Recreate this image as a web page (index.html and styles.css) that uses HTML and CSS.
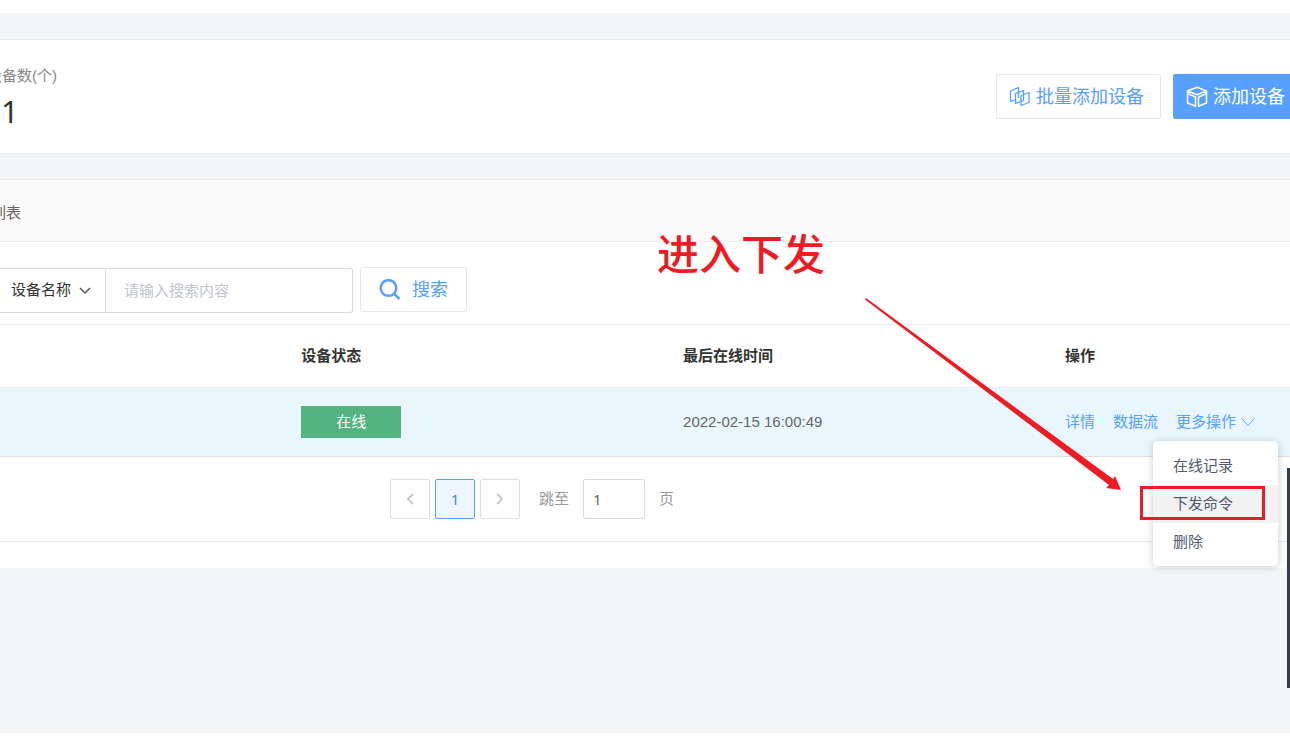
FILE: index.html
```html
<!DOCTYPE html>
<html lang="zh-CN">
<head>
<meta charset="utf-8">
<title>设备列表</title>
<link rel="stylesheet" href="styles.css">
</head>
<body>
<div class="page">
  <main class="content">
    <section class="summary">
      <div class="stat">
        <div class="stat-label">设备数(个)</div>
        <div class="stat-value">1</div>
      </div>
      <div class="actions">
        <button class="btn btn-batch" type="button">
          <svg width="22" height="22" viewBox="0 0 22 22" fill="none" stroke="currentColor" stroke-width="1.300" stroke-linejoin="round"><path d="M6 14 1.500 15.500V5L9.500 1.500V12M6.500 7.500 14.500 4.500V14.500L6.500 17.500zM12 9.500 20 6.500V16.500L12 19.500z"/></svg>
          <span>批量添加设备</span>
        </button>
        <button class="btn btn-primary" type="button">
          <svg width="22" height="22" viewBox="0 0 22 22" fill="none" stroke="currentColor" stroke-width="1.500" stroke-linejoin="round"><path d="M11 1.200 1.500 5 11 8.800 20.500 5zM1.500 5V17L9.500 20.300V11L1.500 7.600M20.500 5V17L12.500 20.300V11L20.500 7.600"/></svg>
          <span>添加设备</span>
        </button>
      </div>
    </section>

    <section class="panel">
      <h2 class="panel-title">列表</h2>
      <form class="search">
        <div class="search-box">
          <div class="select-wrap">
            <select class="field-select" aria-label="搜索字段"><option>设备名称</option></select>
            <svg class="select-arrow" width="12" height="8" viewBox="0 0 12 8" fill="none" stroke="currentColor" stroke-width="1.500"><path d="M1 1l5 5 5-5"/></svg>
          </div>
          <input class="search-input" type="text" placeholder="请输入搜索内容" aria-label="搜索内容">
        </div>
        <button class="btn btn-search" type="button">
          <svg width="22" height="22" viewBox="0 0 22 22" fill="none" stroke="currentColor" stroke-width="2.500"><circle cx="9.500" cy="9" r="7.800"/><path d="M15 14.500 20.500 20"/></svg>
          <span>搜索</span>
        </button>
      </form>

      <table class="devices">
        <colgroup><col class="col-first"><col class="col-mid"><col class="col-mid"><col></colgroup>
        <thead>
          <tr><td></td><th scope="col">设备状态</th><th scope="col">最后在线时间</th><th scope="col">操作</th></tr>
        </thead>
        <tbody>
          <tr>
            <td></td>
            <td><span class="status">在线</span></td>
            <td>2022-02-15 16:00:49</td>
            <td>
              <div class="ops">
                <a href="#">详情</a>
                <a href="#">数据流</a>
                <div class="more">
                  <a href="#">更多操作<svg class="more-arrow" width="14" height="9" viewBox="0 0 14 9" fill="none" stroke="currentColor"><path d="M.5.500 7 7.500 13.500.500"/></svg></a>
                  <div class="menu">
                    <button type="button">在线记录</button>
                    <button type="button" class="is-active">下发命令</button>
                    <button type="button">删除</button>
                    <div class="highlight"></div>
                  </div>
                </div>
              </div>
            </td>
          </tr>
        </tbody>
      </table>

      <nav class="pager" aria-label="分页">
        <button class="page-btn" type="button" aria-label="上一页"><svg width="8" height="12" viewBox="0 0 8 12" fill="none" stroke="currentColor" stroke-width="1.800"><path d="M7 1 2 6l5 5"/></svg></button>
        <button class="page-btn is-current" type="button">1</button>
        <button class="page-btn" type="button" aria-label="下一页"><svg width="8" height="12" viewBox="0 0 8 12" fill="none" stroke="currentColor" stroke-width="1.800"><path d="M1 1l5 5-5 5"/></svg></button>
        <label class="jump-label" for="jump">跳至</label>
        <input class="jump-input" id="jump" type="text" value="1">
        <span class="jump-unit">页</span>
      </nav>
    </section>
  </main>

  <div class="note">进入下发</div>
  <svg class="note-arrow" width="258" height="194" viewBox="0 0 258 194" fill="#ed1c24"><path d="M1 0 248 181 250 178 256 192 241 190 244 187 0 1.500z"/></svg>
  <div class="side-tab"></div>
</div>
</body>
</html>
```
FILE: styles.css
```css
* {
  box-sizing: border-box;
}

body {
  margin: 0;
  background: #fff;
  color: #666;
  font: 15px/20px "Liberation Sans", "Noto Sans CJK SC", sans-serif;
}

button,
input,
select {
  font: inherit;
  color: inherit;
}

button {
  cursor: pointer;
}

a {
  color: #57a0ff;
  text-decoration: none;
}

.page {
  position: relative;
  height: 100vh;
  padding: 13px 0 14px;
  overflow: hidden;
}

.content {
  min-height: 100%;
  padding-top: 26px;
  background: #f4f5f7;
}

.summary {
  display: flex;
  justify-content: space-between;
  align-items: flex-start;
  height: 115px;
  padding-top: 26px;
  background: #fff;
  border: solid #ebedf0;
  border-width: 1px 0;
}

.stat {
  margin-left: -13px;
}

.stat-label {
  color: #888;
}

.stat-value {
  padding-left: 14px;
  font: 31px/50px "Noto Sans", sans-serif;
  color: #333;
}

.actions {
  display: flex;
  gap: 12px;
  margin: 8px -8px 0 0;
}

.btn {
  display: flex;
  align-items: center;
  gap: 5px;
  height: 45px;
  padding: 0 12px;
  background: #fff;
  border: 1px solid #e6e8ed;
  border-radius: 2px;
  color: #57a0ff;
  font-size: 18px;
  white-space: nowrap;
}

.btn-batch {
  padding-right: 16px;
}

.btn-primary {
  background: #57a0ff;
  border-color: #57a0ff;
  color: #fff;
}

.panel {
  margin-top: 25px;
  padding-bottom: 26px;
  background: #fff;
}

.panel-title {
  height: 63px;
  margin: 0;
  padding-top: 23px;
  background: #fafafa;
  border: solid #ebedf0;
  border-width: 1px 0;
  font-size: 15px;
  font-weight: 400;
  line-height: 20px;
  text-indent: -9px;
}

.search {
  display: flex;
  gap: 7px;
  height: 82px;
  padding-top: 25px;
}

.search-box {
  display: flex;
  width: 353px;
  height: 45px;
  margin-top: 1px;
  border: 1px solid #d9d9d9;
  border-left: 0;
  border-radius: 0 3px 3px 0;
}

.select-wrap {
  position: relative;
  width: 106px;
  border-right: 1px solid #d9d9d9;
}

.field-select {
  width: 100%;
  height: 100%;
  padding: 0 11px 2px;
  appearance: none;
  background: none;
  border: 0;
  color: #333;
}

.select-arrow {
  position: absolute;
  top: 18px;
  right: 14px;
  color: #555;
  pointer-events: none;
}

.search-input {
  flex: 1;
  min-width: 0;
  padding: 0 18px;
  background: none;
  border: 0;
}

.search-input::placeholder {
  color: #c0c4cc;
}

.btn-search {
  gap: 11px;
  padding: 0 18px;
}

.devices {
  width: 100%;
  table-layout: fixed;
  border-collapse: collapse;
}

.col-first {
  width: 21.8%;
}

.col-mid {
  width: 29.6%;
}

.devices th,
.devices td {
  padding: 0 20px;
  text-align: left;
}

.devices th {
  height: 63px;
  color: #333;
  font-weight: 700;
}

.devices thead tr {
  border-top: 1px solid #ebedf0;
}

.devices tbody tr {
  height: 69px;
  background: #e9f6fe;
  border-top: 1px solid #ebedf0;
  border-bottom: 1px solid #dcdfe3;
}

.status {
  display: block;
  width: 100px;
  background: #53b381;
  color: #fff;
  line-height: 32px;
  text-align: center;
}

.ops {
  display: flex;
  gap: 18px;
  white-space: nowrap;
}

.more {
  position: relative;
}

.more-arrow {
  margin-left: 5px;
}

.menu {
  position: absolute;
  z-index: 2;
  top: 29px;
  left: -23px;
  width: 125px;
  padding: 6px 0 5px;
  background: #fff;
  border-radius: 5px;
  box-shadow: 0 1px 8px rgba(0, 0, 0, 0.2);
}

.menu button {
  display: block;
  width: 100%;
  height: 38px;
  padding: 0 20px;
  background: none;
  border: 0;
  color: #515a6e;
  text-align: left;
}

.menu .is-active {
  background: #f2f2f2;
}

.highlight {
  position: absolute;
  top: 45px;
  left: -13px;
  width: 125px;
  height: 34px;
  border: 3px solid #ed1c24;
  pointer-events: none;
}

.pager {
  display: flex;
  align-items: center;
  gap: 5px;
  height: 85px;
  padding-left: 390px;
  border-bottom: 1px solid #e4e6e9;
}

.page-btn {
  display: flex;
  align-items: center;
  justify-content: center;
  width: 40px;
  height: 40px;
  padding: 0;
  background: #fff;
  border: 1px solid #dcdee2;
  border-radius: 2px;
  color: #c5c8ce;
  font-family: "Noto Sans", sans-serif;
}

.page-btn.is-current {
  background: #eef6ff;
  border-color: #57a0ff;
  color: #3d8bfd;
}

.jump-label,
.jump-unit {
  color: #999;
}

.jump-label {
  margin: 0 9px 0 14px;
}

.jump-input {
  width: 62px;
  height: 40px;
  padding: 0 9px;
  border: 1px solid #d9d9d9;
  border-radius: 2px;
  font-family: "Noto Sans", sans-serif;
}

.jump-unit {
  margin-left: 9px;
}

.note {
  position: absolute;
  top: 231px;
  left: 657px;
  color: #ed1c24;
  font-size: 42px;
  font-weight: 500;
  line-height: 50px;
}

.note-arrow {
  position: absolute;
  top: 298px;
  left: 865px;
}

.side-tab {
  position: absolute;
  top: 468px;
  right: 0;
  width: 3px;
  height: 220px;
  background: #343b4d;
}
```
